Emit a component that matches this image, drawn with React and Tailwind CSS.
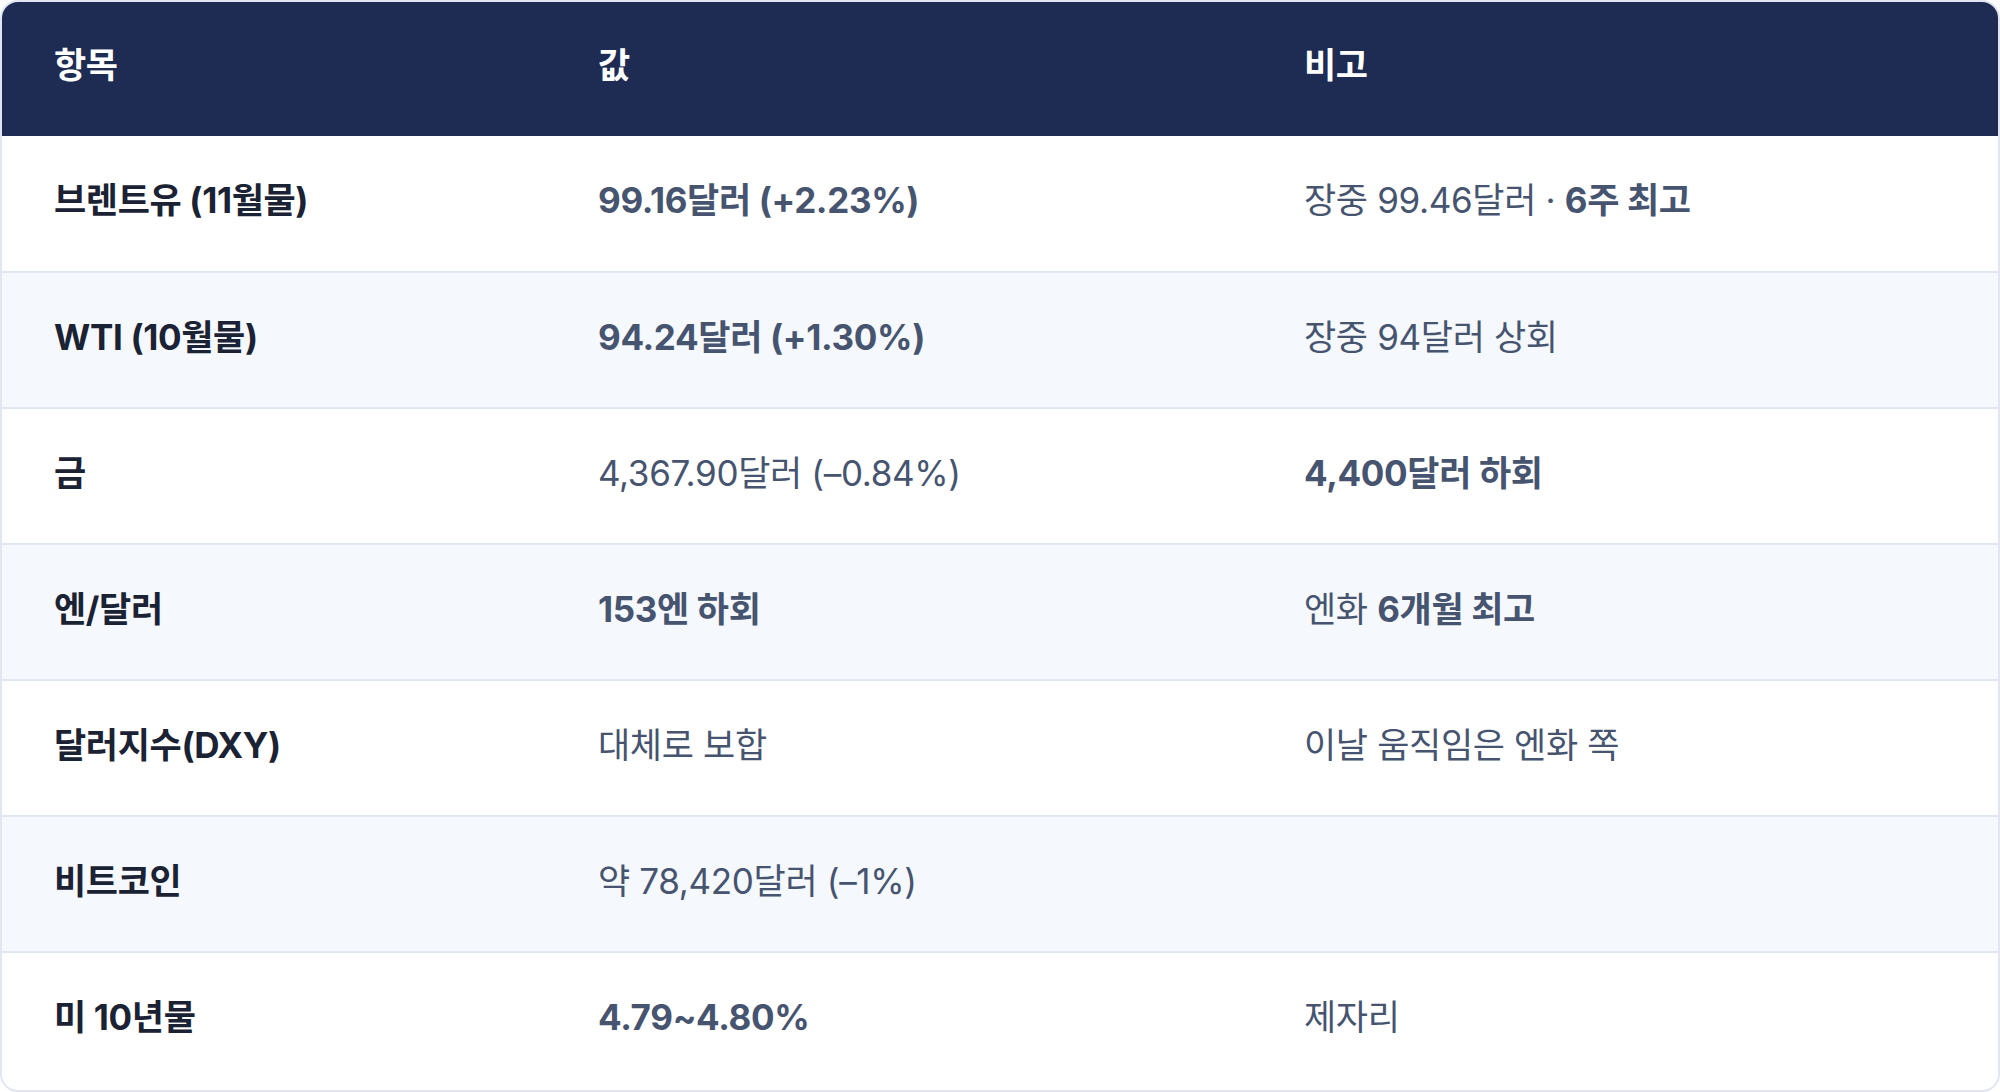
const rows = [
  { label: '브렌트유 (11월물)', value: [{ t: '99.16달러 (+2.23%)', b: true }], note: [{ t: '장중 99.46달러 · ' }, { t: '6주 최고', b: true }] },
  { label: 'WTI (10월물)', value: [{ t: '94.24달러 (+1.30%)', b: true }], note: [{ t: '장중 94달러 상회' }] },
  { label: '금', value: [{ t: '4,367.90달러 (–0.84%)' }], note: [{ t: '4,400달러 하회', b: true }] },
  { label: '엔/달러', value: [{ t: '153엔 하회', b: true }], note: [{ t: '엔화 ' }, { t: '6개월 최고', b: true }] },
  { label: '달러지수(DXY)', value: [{ t: '대체로 보합' }], note: [{ t: '이날 움직임은 엔화 쪽' }] },
  { label: '비트코인', value: [{ t: '약 78,420달러 (–1%)' }], note: [] },
  { label: '미 10년물', value: [{ t: '4.79~4.80%', b: true }], note: [{ t: '제자리' }] },
]

function Parts({ parts }) {
  return parts.map((p, i) => (
    <span key={i} className={p.b ? 'font-bold' : 'font-normal'}>{p.t}</span>
  ))
}

export default function App() {
  return (
    <div
      className="w-[2000px] h-[1092px] bg-white"
      style={{ fontFamily: 'Inter, "Noto Sans CJK KR", sans-serif' }}
    >
      <div className="w-full h-full border-2 border-[#e1e6f2] rounded-[18px] overflow-hidden">
        <table className="w-full border-collapse text-[35px] leading-none tracking-[-0.01em]">
          <colgroup>
            <col className="w-[544px]" />
            <col className="w-[706px]" />
            <col />
          </colgroup>
          <thead>
            <tr className="bg-[#1e2b53] text-white h-[134px]">
              <th className="text-left font-bold pl-[52px] pb-[8px]">항목</th>
              <th className="text-left font-bold pl-[52px] pb-[8px]">값</th>
              <th className="text-left font-bold pl-[52px] pb-[8px]">비고</th>
            </tr>
          </thead>
          <tbody>
            {rows.map((r, i) => (
              <tr
                key={r.label}
                className={`h-[136px] ${i > 0 ? 'border-t-2 border-[#e0e6f2]' : ''} ${i % 2 === 1 ? 'bg-[#f5f8fd]' : 'bg-white'}`}
              >
                <td className="pl-[52px] pb-[6px] font-bold text-[#1a2233]">{r.label}</td>
                <td className="pl-[52px] pb-[6px] text-[#465470]"><Parts parts={r.value} /></td>
                <td className="pl-[52px] pb-[6px] text-[#465470]"><Parts parts={r.note} /></td>
              </tr>
            ))}
          </tbody>
        </table>
      </div>
    </div>
  )
}
